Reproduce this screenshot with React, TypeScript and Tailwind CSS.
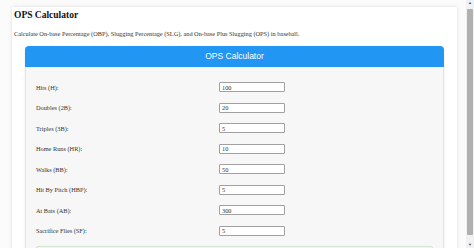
const fields = [
  { label: 'Hits (H):', value: '100' },
  { label: 'Doubles (2B):', value: '20' },
  { label: 'Triples (3B):', value: '5' },
  { label: 'Home Runs (HR):', value: '10' },
  { label: 'Walks (BB):', value: '50' },
  { label: 'Hit By Pitch (HBP):', value: '5' },
  { label: 'At Bats (AB):', value: '300' },
  { label: 'Sacrifice Flies (SF):', value: '5' },
];

export default function App() {
  return (
    <div className="h-screen w-screen overflow-hidden flex bg-[#fbfbfb] font-[Liberation_Serif,serif] text-[#333]">
      <div className="flex-1 min-w-0 pt-[7px] pl-[12px] pr-[9px]">
        <div className="bg-white shadow-[0_0_4px_rgba(0,0,0,0.12)] px-[2px] pt-[3px] pb-4">
          <h1 className="text-[9.5px] font-bold leading-[10px] text-[#111]">OPS Calculator</h1>
          <p className="text-[6.3px] leading-[9px] mt-[8.5px] whitespace-nowrap">
            Calculate On-base Percentage (OBP), Slugging Percentage (SLG), and On-base Plus Slugging (OPS) in baseball.
          </p>

          <div className="mt-[8.5px] mx-[11px] rounded-[4px] border border-[#e4e4e4] bg-[#f7f7f7] shadow-[0_1px_3px_rgba(0,0,0,0.08)]">
            <div className="-mt-px -mx-px h-[21px] rounded-t-[4px] bg-[#2196f3] flex items-center justify-center">
              <span className="text-white text-[8.5px] font-[Liberation_Sans,sans-serif]">OPS Calculator</span>
            </div>
            <div className="px-[10px] pt-[10px] pb-4">
              {fields.map((f) => (
                <div key={f.label} className="flex items-center h-[20.5px]">
                  <label className="w-[183px] text-[6.3px]">{f.label}</label>
                  <input
                    readOnly
                    value={f.value}
                    className="w-[66px] h-[10px] bg-white border border-[#a0a0a0] rounded-[1px] px-[2px] text-[6.3px] text-[#333] leading-none outline-none"
                  />
                </div>
              ))}
              <div className="mt-[5px] h-10 border border-[#cfe6cf] bg-[#eef7ee] rounded-[2px]" />
            </div>
          </div>
        </div>
      </div>

      {/* scrollbar */}
      <div className="w-[8px] shrink-0 bg-[#f1f1f1] flex flex-col items-center">
        <span className="text-[4px] leading-[6px] text-[#505050]">▲</span>
        <div className="w-[6px] h-[226px] mt-[3px] rounded-[1px] bg-[#b0b0b0]" />
        <div className="flex-1" />
        <span className="text-[4px] leading-[6px] text-[#505050]">▼</span>
      </div>
    </div>
  );
}
